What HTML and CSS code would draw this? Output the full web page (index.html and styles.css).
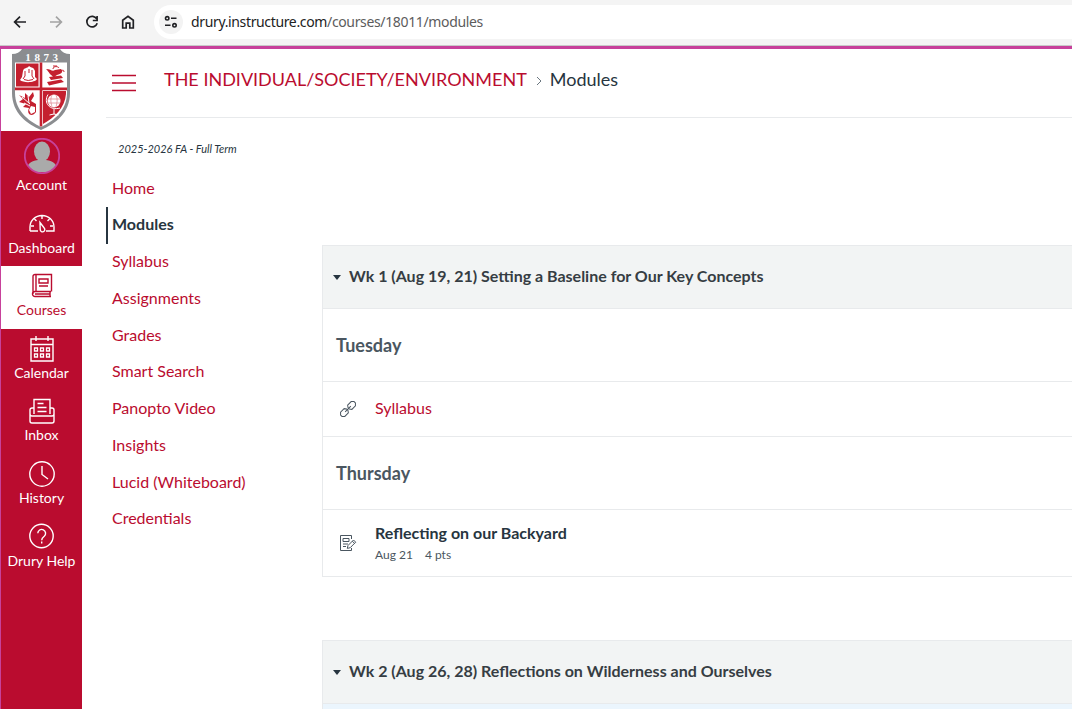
FILE: index.html
```html
<!DOCTYPE html>
<html lang="en">
<head>
<meta charset="utf-8">
<title>Course Modules</title>
<link rel="stylesheet" href="styles.css">
</head>
<body>
<header class="browser">
  <svg class="tool" viewBox="0 0 16 16"><path d="M14 8H3M8 2.6 2.6 8 8 13.4"/></svg>
  <svg class="tool disabled" viewBox="0 0 16 16"><path d="M2 8h11M8 2.6 13.4 8 8 13.4"/></svg>
  <svg class="tool" viewBox="0 0 16 16"><path d="M12.7 4.9A5.3 5.3 0 1 0 13.2 9.3M13.1 2v4.5H8.8"/></svg>
  <svg class="tool" viewBox="0 0 16 16"><path d="M2.7 14V6.2L8 2.2l5.3 4V14H9.8V9.2H6.2V14z"/></svg>
  <div class="address">
    <span class="site"><svg viewBox="0 0 16 16"><circle cx="4.2" cy="4.3" r="1.7"/><path d="M8 4.3h5.5M2 11.3h5.5"/><circle cx="11.5" cy="11.3" r="1.7"/></svg></span>
    <span class="url">drury.instructure.com<span class="path">/courses/18011/modules</span></span>
  </div>
</header>
<div class="app">
  <nav class="global">
    <a class="logo">
      <svg width="60" height="82" viewBox="0 0 60 82">
        <path class="shield" d="M1 5Q8 5 11 0H49Q52 5 59 5V44C59 64 44 75 30 81C16 75 1 64 1 44Z"/>
        <path class="field" d="M4 13.500H56V44C56 61 43 72 30 78C17 72 4 61 4 44Z"/>
        <path class="red" d="M5 14.500H27.500V37.500H5ZM32 42H55V45C54 59 43 69 32 75Z"/>
        <path class="red" d="M28.700 13.500H31.300V77L30 77.700 28.700 77ZM4 38.500H56V41.200H4Z"/>
        <path class="emblem-w" d="M12 22C13 18 16 20 18 17C21 20 22 17 24 22V28L26 30C24 34 12 34 9 31L11 28Z"/>
        <path class="red-line" d="M14 22v5l-2 3M18 20v4M21 21v6l2 3M13 30.500q4 2 9 0"/>
        <path class="red" d="M35 20C40 20 41 23 44 21L50 20C53 23 50 25 46 26L43 28C39 26 38 23 35 20ZM38 28 50 26.500 52 29 40 31ZM36 33 50 30.500 53 33 38 36.500Z"/>
        <path class="red-line" d="M42 20c0-3 5-3 6-1M50 22q3-2 3 1M42 17h4"/>
        <path class="red" d="M8 46 14 49 14 44 18 48 22 43 23 47 20 52 25 55 25 63C21 69 15 65 18 59L12 58 15 55 8 53 12 50Z"/>
        <path class="white-line" d="M11 48 19 55M17 47 18 54M13 54 19 57"/>
        <path class="emblem-w" d="M20 57 24 58 24 63 20 65 18 61Z"/>
        <circle class="emblem-w" cx="43" cy="52" r="6.500"/>
        <path class="white-line" d="M37 45.500C32 54 39 62 49 59M43 60v5M38.500 66q4.500-2 9 0"/>
        <path class="globe-line" d="M37 50h12M37 54h12M41 46c-2 4-1 8 0 12M45 46c2 4 1 8 0 12"/>
        <text class="year" x="32.500" y="11.500">1873</text>
      </svg>
    </a>
    <a class="item account">
      <svg width="36" height="36" viewBox="0 0 36 36"><clipPath id="face"><circle cx="18" cy="18" r="17"/></clipPath><g clip-path="url(#face)" class="person"><ellipse cx="18" cy="13.500" rx="8" ry="10"/><path d="M14 20h8v2c8 1 11 4 12 12H2c1-8 4-11 12-12z"/></g><circle class="ring" cx="18" cy="18" r="17.200"/></svg>
      <span>Account</span>
    </a>
    <a class="item">
      <svg width="26" height="26" viewBox="0 0 26 26"><path d="M1 21V17a12 11.500 0 0 1 24 0v4h-8M1 21h8M13 6v3M5.500 9l2 2M20.500 9l-2 2M2 16h3M21 16h3"/><path d="M11 12.500 15.200 18a2.300 2.300 0 1 1-4 1.600z"/></svg>
      <span>Dashboard</span>
    </a>
    <a class="item active">
      <svg width="26" height="26" viewBox="0 0 26 26"><path d="M22 18.500H6a2.500 2.500 0 0 0 0 5H22M4 21V3.500A2 2 0 0 1 6 1.500H22.500V18.500M21 18.500v5M7 2v16M6 21h15M10 6h9v4h-9zM10 13h9"/></svg>
      <span>Courses</span>
    </a>
    <a class="item">
      <svg width="26" height="26" viewBox="0 0 26 26"><path d="M2 3h22v22H2zM2 8.500h22M7 0v5M19 0v5"/><path class="cells" d="M5.500 12h3v3h-3zM11.500 12h3v3h-3zM17.500 12h3v3h-3zM5.500 18h3v3h-3zM11.500 18h3v3h-3zM17.500 18h3v3h-3z"/></svg>
      <span>Calendar</span>
    </a>
    <a class="item">
      <svg width="26" height="26" viewBox="0 0 26 26"><path d="M5 16V1.500H21V16M5 10H3a2 2 0 0 0-2 2v11a2 2 0 0 0 2 2H23a2 2 0 0 0 2-2V12a2 2 0 0 0-2-2h-2M1 16a2 2 0 0 0 2 2H23a2 2 0 0 0 2-2M8.500 5.500h6M8.500 9.500h9M8.500 13.500h9"/></svg>
      <span>Inbox</span>
    </a>
    <a class="item">
      <svg width="26" height="26" viewBox="0 0 26 26"><circle cx="13" cy="13" r="12.200"/><path d="M13 5v8.500l6 4.500"/></svg>
      <span>History</span>
    </a>
    <a class="item">
      <svg width="26" height="26" viewBox="0 0 26 26"><circle cx="12.500" cy="13" r="11.700"/><path d="M8.800 10.300a3.900 3.900 0 1 1 6.400 3c-1.900 1.500-2.500 2-2.500 3.900M12.700 18.500v2"/></svg>
      <span>Drury Help</span>
    </a>
  </nav>
  <main class="page">
    <div class="crumbs">
      <svg class="menu" width="24" height="18" viewBox="0 0 24 18"><path d="M0 1.500h24M0 9h24M0 16.500h24"/></svg>
      <span class="course">THE INDIVIDUAL/SOCIETY/ENVIRONMENT</span>
      <svg class="chevron" width="6" height="10" viewBox="0 0 6 10"><path d="m1 1 4 4-4 4"/></svg>
      <span class="here">Modules</span>
    </div>
    <div class="columns">
      <aside class="side">
        <div class="term">2025-2026 FA - Full Term</div>
        <a>Home</a><a class="selected">Modules</a><a>Syllabus</a><a>Assignments</a><a>Grades</a><a>Smart Search</a><a>Panopto Video</a><a>Insights</a><a>Lucid (Whiteboard)</a><a>Credentials</a>
      </aside>
      <div class="modules">
        <section class="module">
          <h2><i class="caret"></i><span>Wk 1 (Aug 19, 21) Setting a Baseline for Our Key Concepts</span></h2>
          <h3>Tuesday</h3>
          <div class="row link">
            <svg width="18" height="18" viewBox="0 0 18 18"><g transform="rotate(-45 9 9)"><path d="M6.500 6H1.500L-.5 8v2l2 2h5l1.500-2V8zM11.500 6h5l2 2v2l-2 2h-5L10 10V8zM5 9h8"/></g></svg>
            <a>Syllabus</a>
          </div>
          <h3>Thursday</h3>
          <div class="row assignment">
            <svg width="18" height="18" viewBox="0 0 18 18"><path d="M12.500 5V1.500H1.500v15h11V14M4 4.500h6v3H4zM4 10h5M4 12.500h3M9 11.500l5.500-5.500 2.200 2.200-5.500 5.500-2.900.7zM13.300 7.200l2.200 2.200"/></svg>
            <div><b>Reflecting on our Backyard</b><small><span>Aug 21</span><span>4 pts</span></small></div>
          </div>
        </section>
        <section class="module second">
          <h2><i class="caret"></i><span>Wk 2 (Aug 26, 28) Reflections on Wilderness and Ourselves</span></h2>
          <div class="highlight"></div>
        </section>
      </div>
    </div>
  </main>
</div>
</body>
</html>
```
FILE: styles.css
```css
* { box-sizing: border-box; }
body { margin: 0; height: 709px; overflow: hidden; background: #fff; color: #273540; font-family: Lato, sans-serif; font-size: 16px; }
svg { display: block; flex: none; fill: none; stroke: currentColor; }

.browser { display: flex; align-items: center; height: 46px; padding: 0 0 2px 12px; gap: 20px; background: #f4f4f4; border-bottom: 1px solid #c9c9c9; color: #202124; overflow: hidden; }
.tool { width: 16px; height: 16px; stroke-width: 1.7; }
.disabled { color: #a3a3a3; }
.address { display: flex; align-items: center; flex: 1; height: 34px; padding-left: 5px; gap: 8px; background: #fff; border-radius: 17px 0 0 17px; margin-left: -2px; }
.site { display: grid; place-items: center; width: 24px; height: 24px; border-radius: 50%; background: #f3f3f3; }
.site svg { width: 16px; height: 16px; stroke-width: 1.6; }
.url { font: 14px "Noto Sans", sans-serif; letter-spacing: -0.355px; color: #222; white-space: nowrap; }
.path { color: #5c5c5c; }

.app { display: flex; height: 663px; border-top: 3px solid #c7419b; border-left: 1px solid #c7419b; }
.global { width: 81px; flex: none; background: #ba0c2f; color: #fff; }
.logo { display: block; height: 82px; padding: 0 0 0 10px; background: #fff; }
.logo svg { stroke: none; }
.shield { fill: #8b8d90; }
.field, .emblem-w { fill: #fff; }
.red { fill: #c4202f; }
.red-line { stroke: #c4202f; stroke-width: 1; }
.white-line { stroke: #fff; stroke-width: 1; }
.globe-line { stroke: #dc8189; stroke-width: 0.7; }
.year { fill: #fff; font: bold 11px "Liberation Serif", serif; text-anchor: middle; letter-spacing: 3.6px; }
.item { display: flex; flex-direction: column; align-items: center; height: 62.6px; padding-top: 7px; font-size: 14px; line-height: 17px; }
.item svg { stroke-width: 1.4; }
.item span { margin-top: 2.2px; white-space: nowrap; }
.account { height: 72.4px; }
.account span { margin-top: 2px; }
.person { fill: #aaa; stroke: none; }
.item .ring { stroke: #c7419b; stroke-width: 1.8; }
.active { background: #fff; color: #ba0c2f; }
.cells { stroke-width: 1.3; }

.page { flex: 1; min-width: 0; padding-left: 24px; }
.crumbs { display: flex; align-items: center; height: 69px; border-bottom: 1px solid #e8eaec; padding: 0 0 9px 6px; font-size: 18px; white-space: nowrap; }
.menu { color: #ba0c2f; stroke-width: 1.6; margin: 9px 28px 0 0; }
.course { color: #ba0c2f; }
.chevron { color: #6b7780; margin: 4px 8px 0 9px; }
.columns { display: flex; }
.side { width: 216px; flex: none; padding-top: 23px; }
.term { height: 29.55px; padding-left: 12px; font-size: 11px; line-height: 16px; font-style: italic; }
.side a { display: block; height: 36.78px; padding-left: 6px; line-height: 34px; color: #ba0c2f; }
.side .selected { border-left: 2px solid #273540; padding-left: 4px; color: #273540; font-weight: bold; }
.modules { flex: 1; min-width: 0; padding-top: 127px; white-space: nowrap; }
.module { border: 1px solid #e8eaec; border-right: 0; }
.second { margin-top: 63px; border-bottom: 0; }
h2, h3 { margin: 0; }
h2 { display: flex; align-items: center; height: 63px; padding: 0 0 3px 10px; background: #f2f4f4; border-bottom: 1px solid #e8eaec; font-size: 16px; color: #363d43; }
.caret { margin: 4px 8px 0 0; border: solid transparent; border-width: 5px 4px 0; border-top-color: #273540; }
h3 { height: 73px; padding-left: 13px; border-bottom: 1px solid #e8eaec; font-size: 18px; line-height: 72px; color: #4a5660; }
.row { display: flex; align-items: center; padding-left: 16px; gap: 18px; color: #4a5660; }
.link { height: 55px; border-bottom: 1px solid #e8eaec; }
.link a { padding-bottom: 3px; color: #ba0c2f; }
.assignment { height: 66px; }
.assignment b { display: block; color: #273540; line-height: 20px; }
.assignment small { display: flex; gap: 12px; margin-top: 4px; font-size: 12px; line-height: 16px; }
.highlight { height: 5px; background: #ebf5fd; }
```
